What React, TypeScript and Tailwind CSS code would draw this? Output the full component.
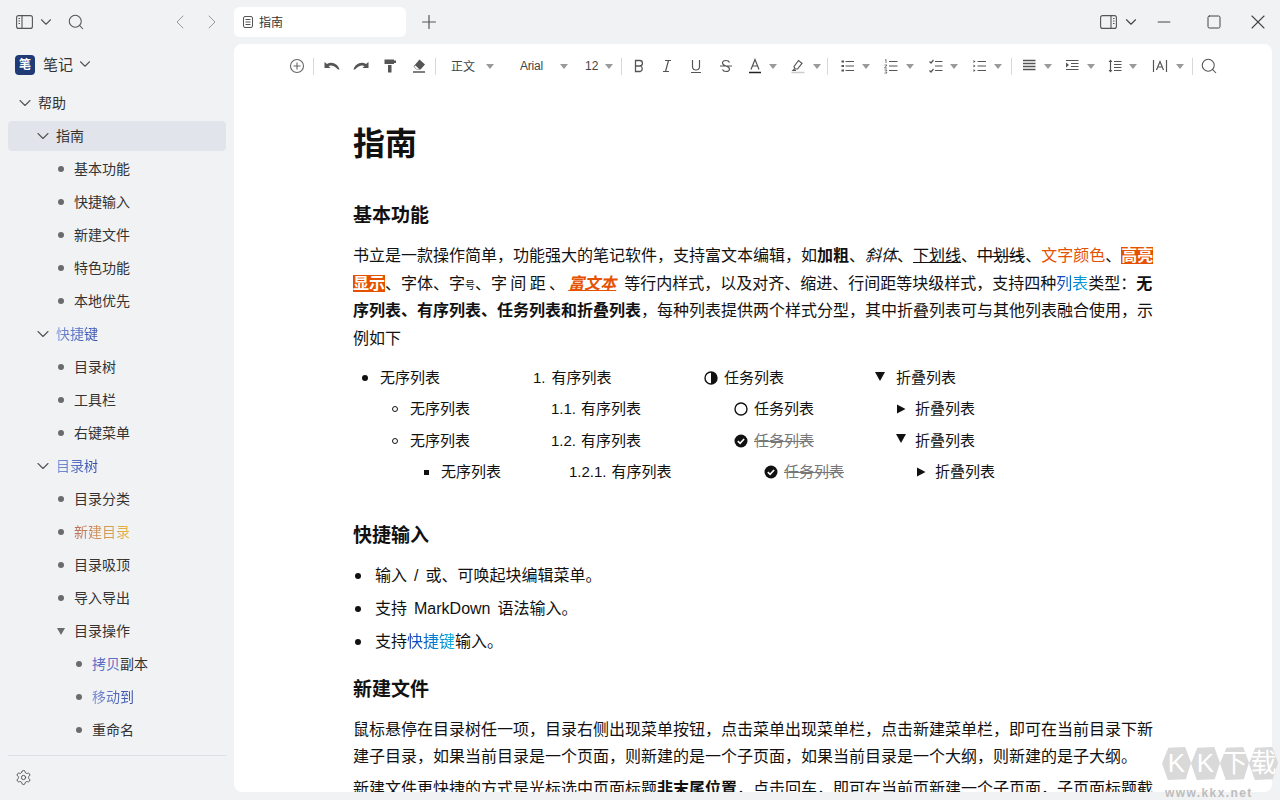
import { ChevronDown, ChevronLeft, ChevronRight, Minus, Plus, Search, Settings, Square, X } from "lucide-react"
import type { ReactNode } from "react"

const font = "font-['Liberation_Sans','Noto_Sans_CJK_SC',sans-serif]"

function Caret() {
  return (
    <svg width="8" height="5" viewBox="0 0 8 5" className="shrink-0">
      <path d="M0 0h8L4 5z" fill="#9a9a9a" />
    </svg>
  )
}

function Sep({ className }: { className: string }) {
  return <div className={`w-px h-[17px] bg-[#d8d8d8] shrink-0 ${className}`} />
}

function Ico({ className, children }: { className: string; children: ReactNode }) {
  return (
    <svg width="16" height="16" viewBox="0 0 16 16" fill="none" stroke="#555" strokeWidth="1.2" className={`shrink-0 ${className}`}>
      {children}
    </svg>
  )
}

function Toolbar() {
  return (
    <div className="h-[44px] flex items-center pl-[54px] text-[#444] text-[12px]">
      <svg width="18" height="18" viewBox="0 0 18 18" fill="none" stroke="#666" strokeWidth="1.1" className="mr-[7px] shrink-0">
        <circle cx="9" cy="9" r="6.5" />
        <path d="M9 5.5v7M5.5 9h7" />
      </svg>
      <Sep className="" />
      <div className="w-[29px] ml-[3px] flex justify-center">
        <svg width="16" height="16" viewBox="0 0 16 16">
          <path d="M0.5 4v6H6.500L4.500 8C7 6.800 10.500 7.500 14 11.500h1.500C14.500 6.500 8 2.500 3 6z" fill="#555" />
        </svg>
      </div>
      <div className="w-[29px] flex justify-center">
        <svg width="16" height="16" viewBox="0 0 16 16">
          <path d="M15.500 4v6H9.500l2-2C9 6.800 5.500 7.500 2 11.500H.5C1.500 6.500 8 2.500 13 6z" fill="#555" />
        </svg>
      </div>
      <div className="w-[29px] flex justify-center">
        <svg width="16" height="16" viewBox="0 0 16 16">
          <path d="M2.500 1.500h9.500v4.500H2.500zM12 2.500h2v2.500h-2zM6 7h3.500v7.500H6z" fill="#555" />
        </svg>
      </div>
      <div className="w-[29px] flex justify-center">
        <svg width="16" height="16" viewBox="0 0 16 16">
          <path d="M8.500 1.500l5.500 5-4.500 5h-4l-3-3z" fill="#555" />
          <path d="M4.500 7.500l3.800 3.700h-2.600l-2.600-2.600z" fill="#fff" />
          <path d="M2 14h12" stroke="#555" strokeWidth="1.300" />
        </svg>
      </div>
      <Sep className="ml-[2px]" />
      <span className="ml-[15px] w-[24px] mt-[1px]">正文</span>
      <div className="ml-[11px]"><Caret /></div>
      <span className="ml-[26px] w-[24px] tracking-[-0.2px]">Arial</span>
      <div className="ml-[16px]"><Caret /></div>
      <span className="ml-[17px] w-[13px]">12</span>
      <div className="ml-[7px]"><Caret /></div>
      <Sep className="ml-[8px]" />
      <Ico className="ml-[9px]">
        <path d="M4.500 2.500h4.200a2.700 2.700 0 010 5.500H4.500zM4.500 8h4.800a2.900 2.900 0 010 5.500H4.500z" strokeWidth="1.300" />
      </Ico>
      <Ico className="ml-[12px]">
        <path d="M6 2.500h6M4 13.500h6M9.500 2.500l-3 11" />
      </Ico>
      <Ico className="ml-[13px]">
        <path d="M4.500 2v6.500a3.500 3.500 0 007 0V2M3 14.500h10" />
      </Ico>
      <Ico className="ml-[14px]">
        <path d="M11.500 4.500C11 3 9.500 2.500 8 2.500 6 2.500 4.500 3.500 4.500 5c0 3.500 7 2.500 7 6 0 1.500-1.500 2.500-3.500 2.500-1.500 0-3-.5-3.500-2M2 8h12" />
      </Ico>
      <Ico className="ml-[13px]">
        <path d="M4 11.500L8 1.500l4 10M5.300 8h5.400" />
        <path d="M2 14.500h12" stroke="#222" strokeWidth="1.500" />
      </Ico>
      <div className="ml-[6px]"><Caret /></div>
      <Ico className="ml-[13px]">
        <path d="M4 8.500L8.500 2.500l3.500 2.800L7.500 11H5z" fill="#fff" />
        <path d="M4.500 11L3 12.500h3" />
        <path d="M1.500 14.500h13" stroke="#ccc" strokeWidth="1.600" />
      </Ico>
      <div className="ml-[7px]"><Caret /></div>
      <Sep className="ml-[6px]" />
      <Ico className="ml-[12px]">
        <path d="M5.500 3.500H14M5.500 8H14M5.500 12.500H14" />
        <path d="M1.500 3.500h2.500M1.500 8h2.500M1.500 12.500h2.500" strokeWidth="1.800" />
      </Ico>
      <div className="ml-[6px]"><Caret /></div>
      <Ico className="ml-[13px]">
        <path d="M6 3.500h8.500M6 8h8.500M6 12.500h8.500" />
        <path d="M2 2l1-.5V5M1.500 7h2.500L1.500 10h2.500M1.500 12h2.500L3 13.500l1 1.500H1.500" strokeWidth=".8" />
      </Ico>
      <div className="ml-[7px]"><Caret /></div>
      <Ico className="ml-[14px]">
        <path d="M7 3.500h7.500M7 8h7.500M7 12.500h7.500" />
        <path d="M1.500 3.500l1.500 1.500 2.500-3M1.500 12.500l1.500 1.500 2.500-3" />
      </Ico>
      <div className="ml-[6px]"><Caret /></div>
      <Ico className="ml-[14px]">
        <path d="M5.500 3.500H14M5.500 8H14M5.500 12.500H14" />
        <path d="M1.500 2l2 1.500-2 1.500zM1.500 6.500l2 1.500-2 1.500zM1.500 11l2 1.500-2 1.500z" fill="#555" stroke="none" />
      </Ico>
      <div className="ml-[6px]"><Caret /></div>
      <Sep className="ml-[9px]" />
      <Ico className="ml-[9px]">
        <path d="M2 2.500h12.500M2 5.500h12.500M2 8.500h12.500M2 11.500h12.500" strokeWidth="1.300" />
      </Ico>
      <div className="ml-[7px]"><Caret /></div>
      <Ico className="ml-[12px]">
        <path d="M2 2.500h12.500M7 5.500h7.500M7 8.500h7.500M2 11.500h12.500" />
        <path d="M2 4.500l3 2.500-3 2.500z" fill="#555" stroke="none" />
      </Ico>
      <div className="ml-[7px]"><Caret /></div>
      <Ico className="ml-[12px]">
        <path d="M7 3.500h7.500M7 6.500h7.500M7 9.500h7.500M7 12.500h7.500M3.500 2.500v11" />
        <path d="M1.500 4l2-2.500 2 2.500zM1.500 12l2 2.500 2-2.500z" fill="#555" stroke="none" />
      </Ico>
      <div className="ml-[6px]"><Caret /></div>
      <Ico className="ml-[15px]">
        <path d="M1.500 2v12M14.500 2v12M4.500 12L8 3.500l3.500 8.500M5.700 9h4.600" />
      </Ico>
      <div className="ml-[8px]"><Caret /></div>
      <Sep className="ml-[8px]" />
      <Search size={18} strokeWidth={1.400} color="#555" className="ml-[7px] shrink-0" />
    </div>
  )
}

type Row = { label: ReactNode; depth: number; mark: "open" | "dot" | "tri"; active?: boolean }

const blue = "bg-gradient-to-r from-[#7f93d8] to-[#2f49a8] bg-clip-text text-transparent"

const rows: Row[] = [
  { label: "帮助", depth: 0, mark: "open" },
  { label: "指南", depth: 1, mark: "open", active: true },
  { label: "基本功能", depth: 2, mark: "dot" },
  { label: "快捷输入", depth: 2, mark: "dot" },
  { label: "新建文件", depth: 2, mark: "dot" },
  { label: "特色功能", depth: 2, mark: "dot" },
  { label: "本地优先", depth: 2, mark: "dot" },
  { label: <span className={blue}>快捷键</span>, depth: 1, mark: "open" },
  { label: "目录树", depth: 2, mark: "dot" },
  { label: "工具栏", depth: 2, mark: "dot" },
  { label: "右键菜单", depth: 2, mark: "dot" },
  { label: <span className={blue}>目录树</span>, depth: 1, mark: "open" },
  { label: "目录分类", depth: 2, mark: "dot" },
  {
    label: <span className="bg-gradient-to-r from-[#b9705a] to-[#e8b83c] bg-clip-text text-transparent">新建目录</span>,
    depth: 2,
    mark: "dot",
  },
  { label: "目录吸顶", depth: 2, mark: "dot" },
  { label: "导入导出", depth: 2, mark: "dot" },
  { label: "目录操作", depth: 2, mark: "tri" },
  {
    label: (
      <>
        <span className="text-[#5c6fc4]">拷贝</span>副本
      </>
    ),
    depth: 3,
    mark: "dot",
  },
  { label: <span className={blue}>移动到</span>, depth: 3, mark: "dot" },
  { label: "重命名", depth: 3, mark: "dot" },
]

const depthPad = ["pl-[8px]", "pl-[26px]", "pl-[44px]", "pl-[62px]"]

function Sidebar() {
  return (
    <aside className="w-[234px] shrink-0 flex flex-col h-full">
      <div className="h-[44px] flex items-center pl-[16px] text-[#555]">
        <svg width="17" height="14" viewBox="0 0 17 14" fill="none" stroke="#555" strokeWidth="1.100" className="shrink-0">
          <rect x=".6" y=".6" width="15.800" height="12.800" rx="2" />
          <path d="M6 .6v12.800M2.500 3.500h1.500M2.500 6h1.500M2.500 8.500h1.500" />
        </svg>
        <ChevronDown size={18} strokeWidth={1.500} className="ml-[4px] shrink-0" />
        <Search size={18} strokeWidth={1.400} className="ml-[12px] shrink-0" />
        <ChevronLeft size={24} strokeWidth={1.000} className="ml-[83px] text-[#999] shrink-0" />
        <ChevronRight size={24} strokeWidth={1.000} className="ml-[8px] text-[#999] shrink-0" />
      </div>
      <div className="h-[40px] mt-[1px] flex items-center pl-[15px]">
        <div className="w-[20px] h-[20px] rounded-[4px] bg-[#1f3a75] text-white text-[12px] font-bold flex items-center justify-center">笔</div>
        <span className="ml-[8px] text-[15px] text-[#333]">笔记</span>
        <ChevronDown size={18} strokeWidth={1.500} className="ml-[3px] mb-[2px] text-[#555]" />
      </div>
      <div className="flex-1 px-[8px]">
        {rows.map((r, i) => (
          <div
            key={i}
            className={`h-[30px] mt-[3px] flex items-center rounded-[4px] text-[14px] text-[#333] ${depthPad[r.depth]} ${r.active ? "bg-[#e1e4ea]" : ""}`}
          >
            <div className="w-[18px] mr-[4px] flex justify-center text-[#555]">
              {r.mark === "open" && <ChevronDown size={20} strokeWidth={1.300} className="shrink-0" />}
              {r.mark === "dot" && <div className="w-[6px] h-[6px] rounded-full bg-[#6b6b6b]" />}
              {r.mark === "tri" && (
                <svg width="8" height="7" viewBox="0 0 8 7">
                  <path d="M0 0h8L4 7z" fill="#6b6b6b" />
                </svg>
              )}
            </div>
            <span>{r.label}</span>
          </div>
        ))}
      </div>
      <div className="mx-[8px] border-t border-[#dcdfe4] h-[45px] flex items-center pl-[7px]">
        <Settings size={17} strokeWidth={1.400} className="text-[#555] mb-[2px]" />
      </div>
    </aside>
  )
}

function TopBar() {
  return (
    <div className="h-[44px] flex items-center shrink-0">
      <div className="w-[172px] h-[30px] rounded-[6px] bg-white flex items-center pl-[9px] text-[12px] text-[#333]">
        <svg width="10" height="12" viewBox="0 0 10 12" fill="none" stroke="#555" strokeWidth="1">
          <rect x=".5" y=".5" width="9" height="11" rx="1.500" />
          <path d="M2.500 3.500h5M2.500 6h5M2.500 8.500h5" />
        </svg>
        <span className="ml-[6px] mt-[1px]">指南</span>
      </div>
      <Plus size={22} strokeWidth={1.300} className="ml-[12px] text-[#555]" />
      <div className="ml-auto flex items-center text-[#444]">
        <svg width="17" height="14" viewBox="0 0 17 14" fill="none" stroke="#555" strokeWidth="1.100" className="shrink-0">
          <rect x=".6" y=".6" width="15.800" height="12.800" rx="2" />
          <path d="M11 .6v12.800M13 3.500h1.500M13 6h1.500M13 8.500h1.500" />
        </svg>
        <ChevronDown size={18} strokeWidth={1.500} className="ml-[5px] shrink-0" />
        <Minus size={20} strokeWidth={1.300} className="ml-[14px] shrink-0" />
        <Square size={16} strokeWidth={1.500} className="ml-[32px] shrink-0" />
        <X size={24} strokeWidth={1.100} className="ml-[24px] mr-[2px] shrink-0" />
      </div>
    </div>
  )
}

const grad = "bg-gradient-to-r from-[#1a2fb8] to-[#0fb0e0] bg-clip-text text-transparent"

function Bullet({ kind }: { kind: "fill" | "hollow" | "square" }) {
  return (
    <div className="w-[10px] mr-[10px] flex justify-center shrink-0">
      {kind === "fill" && <div className="w-[6px] h-[6px] rounded-full bg-[#111]" />}
      {kind === "hollow" && <div className="w-[6px] h-[6px] rounded-full border border-[#111]" />}
      {kind === "square" && <div className="w-[5px] h-[5px] bg-[#111]" />}
    </div>
  )
}

function Check() {
  return (
    <svg width="14" height="14" viewBox="0 0 14 14" className="mx-[1px] mr-[6px] shrink-0">
      <circle cx="7" cy="7" r="6.500" fill="#111" />
      <path d="M3.800 7.200l2.300 2.200 4-4.400" stroke="#fff" strokeWidth="1.600" fill="none" />
    </svg>
  )
}

function TriDown() {
  return (
    <svg width="12" height="10" viewBox="0 0 12 10" className="shrink-0 mb-[3px]">
      <path d="M1 0h10L6 9z" fill="#111" />
    </svg>
  )
}

function TriRight() {
  return (
    <svg width="12" height="10" viewBox="0 0 12 10" className="shrink-0">
      <path d="M2 0.500l8.500 4.500L2 9.500z" fill="#111" />
    </svg>
  )
}

function ListSample() {
  const rowCls = "h-[31.330px] flex items-center"
  const done = "text-[#777] line-through"
  return (
    <div className="mt-[10.500px] grid grid-cols-[172px_172px_171px_1fr] text-[15px] text-[#111]">
      <div>
        <div className={`${rowCls} pl-[7px]`}><Bullet kind="fill" />无序列表</div>
        <div className={`${rowCls} pl-[37px]`}><Bullet kind="hollow" />无序列表</div>
        <div className={`${rowCls} pl-[37px]`}><Bullet kind="hollow" />无序列表</div>
        <div className={`${rowCls} pl-[68px]`}><Bullet kind="square" />无序列表</div>
      </div>
      <div>
        <div className={`${rowCls} pl-[8px]`}>1.<span className="ml-[6px]">有序列表</span></div>
        <div className={`${rowCls} pl-[26px]`}>1.1.<span className="ml-[5px]">有序列表</span></div>
        <div className={`${rowCls} pl-[26px]`}>1.2.<span className="ml-[5px]">有序列表</span></div>
        <div className={`${rowCls} pl-[44px]`}>1.2.1.<span className="ml-[5px]">有序列表</span></div>
      </div>
      <div>
        <div className={`${rowCls} pl-[7px]`}>
          <svg width="14" height="14" viewBox="0 0 14 14" className="mr-[6px] shrink-0">
            <circle cx="7" cy="7" r="6" fill="#fff" stroke="#111" strokeWidth="1.400" />
            <path d="M7 1a6 6 0 010 12z" fill="#111" />
          </svg>
          任务列表
        </div>
        <div className={`${rowCls} pl-[36px]`}>
          <svg width="14" height="14" viewBox="0 0 14 14" className="mx-[1px] mr-[6px] shrink-0">
            <circle cx="7" cy="7" r="6" fill="#fff" stroke="#111" strokeWidth="1.400" />
          </svg>
          任务列表
        </div>
        <div className={`${rowCls} pl-[36px]`}><Check /><span className={done}>任务列表</span></div>
        <div className={`${rowCls} pl-[66px]`}><Check /><span className={done}>任务列表</span></div>
      </div>
      <div>
        <div className={`${rowCls} pl-[6px]`}><TriDown /><span className="ml-[10px]">折叠列表</span></div>
        <div className={`${rowCls} pl-[27px]`}><TriRight /><span className="ml-[8px]">折叠列表</span></div>
        <div className={`${rowCls} pl-[27px]`}><TriDown /><span className="ml-[8px]">折叠列表</span></div>
        <div className={`${rowCls} pl-[47px]`}><TriRight /><span className="ml-[8px]">折叠列表</span></div>
      </div>
    </div>
  )
}

function Doc() {
  const h2 = "text-[19px] leading-[28px] font-bold text-[#111]"
  const p = "text-[16px] leading-[27.500px] text-[#111] mr-[-4px]"
  const li = "h-[33px] flex items-center text-[16px] text-[#111]"
  const dot = "w-[6px] h-[6px] rounded-full bg-[#111] ml-[2px] mr-[14px]"
  return (
    <div className="w-[800px] mx-auto pt-[36px]">
      <h1 className="text-[32px] leading-[40px] font-bold text-[#111]">指南</h1>
      <h2 className={`${h2} mt-[38px]`}>基本功能</h2>
      <p className={`${p} mt-[12px]`}>
        书立是一款操作简单，功能强大的笔记软件，支持富文本编辑，如<b>加粗</b>、<i>斜体</i>、
        <span className="underline">下划线</span>、<span className="line-through">中划线</span>、
        <span className="text-[#e65100]">文字颜色</span>、<span className="bg-[#e65100] text-white font-bold">高亮显示</span>、字体、字
        <span className="text-[10px] leading-none">号</span>、<span className="tracking-[3.3px]">字间距、</span>
        <b className="italic underline text-[#e65100] mr-[3.500px]">富文本</b> 等行内样式，以及对齐、缩进、行间距等块级样式，支持四种
        <span className={grad}>列表</span>类型：<b>无序列表、有序列表、任务列表和折叠列表</b>，每种列表提供两个样式分型，其中折叠列表可与其他列表融合使用，示例如下
      </p>
      <ListSample />
      <h2 className={`${h2} mt-[34px]`}>快捷输入</h2>
      <ul className="mt-[9.500px]">
        <li className={li}>
          <div className={dot} />
          输入<span className="mx-[7px]">/</span>或、可唤起块编辑菜单。
        </li>
        <li className={li}>
          <div className={dot} />
          支持<span className="mx-[7px]">MarkDown</span>语法输入。
        </li>
        <li className={li}>
          <div className={dot} />
          支持<span className={grad}>快捷键</span>输入。
        </li>
      </ul>
      <h2 className={`${h2} mt-[17.500px]`}>新建文件</h2>
      <p className={`${p} mt-[12px]`}>
        鼠标悬停在目录树任一项，目录右侧出现菜单按钮，点击菜单出现菜单栏，点击新建菜单栏，即可在当前目录下新建子目录，如果当前目录是一个页面，则新建的是一个子页面，如果当前目录是一个大纲，则新建的是子大纲。
      </p>
      <p className={`${p} mt-[4px]`}>
        新建文件更快捷的方式是光标选中页面标题<b>非末尾位置</b>，点击回车，即可在当前页新建一个子页面，子页面标题截
      </p>
    </div>
  )
}

function Stamp({ children }: { children: ReactNode }) {
  return (
    <div className="w-[29px] h-[33px] bg-[#d9d9d9] text-white text-[26px] leading-[33px] text-center [clip-path:polygon(22%_2%,80%_0,100%_48%,82%_98%,20%_100%,0_50%)]">
      {children}
    </div>
  )
}

export default function App() {
  return (
    <div className={`relative w-[1280px] h-[800px] overflow-hidden bg-[#f1f2f4] flex ${font}`}>
      <Sidebar />
      <main className="flex-1 flex flex-col min-w-0 pr-[8px] pb-[8px]">
        <TopBar />
        <div className="flex-1 min-h-0 bg-white rounded-[8px] overflow-hidden">
          <Toolbar />
          <Doc />
        </div>
      </main>
      <div className="absolute right-[2px] top-[747px] flex">
        <Stamp>K</Stamp>
        <Stamp>K</Stamp>
        <Stamp>下</Stamp>
        <Stamp>载</Stamp>
      </div>
      <div className="absolute left-[1165px] top-[787px] text-[12px] leading-[13px] font-bold text-[#bdbdbd] tracking-[1.4px]">www.kkx.net</div>
    </div>
  )
}
